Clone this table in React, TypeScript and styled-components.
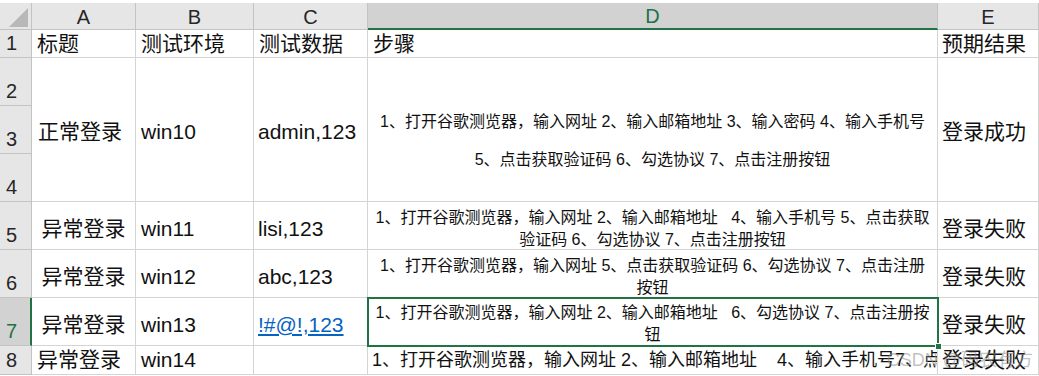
import React from 'react';
import styled, { createGlobalStyle, css } from 'styled-components';

const green = '#217346';
const grid = '#d4d4d4';
const headLine = '#c3c3c3';
const font = `"Liberation Sans", "Noto Sans CJK SC", sans-serif`;

const GlobalStyle = createGlobalStyle`
  html, body {
    margin: 0;
    padding: 0;
    background: #ffffff;
    overflow: hidden;
  }
  body {
    font-family: ${font};
    color: #111111;
  }
`;

interface CellProps {
  $align?: 'left' | 'center';
  $size?: number;
  $span?: number;
  $pt?: number;
  $pl?: number;
  $lh?: number;
}

const Sheet = styled.div`
  position: relative;
  display: grid;
  grid-template-columns: 32px 104px 118px 114px 570px 101px;
  grid-template-rows: 27px 28px 48px 48px 48px 48px 48px 48px 29px;
  padding-top: 3px;
  width: 1039px;
`;

const Corner = styled.div`
  display: flex;
  align-items: flex-end;
  justify-content: flex-end;
  padding: 0 3px 2px 0;
  background: #e6e6e6;
  border-right: 1px solid ${headLine};
  border-bottom: 1px solid ${headLine};

  &::before {
    content: '';
    width: 0;
    height: 0;
    border-left: 19px solid transparent;
    border-bottom: 19px solid #b8b8b8;
  }
`;

const ColHeader = styled.div<{ $selected?: boolean }>`
  display: flex;
  align-items: center;
  justify-content: center;
  padding-top: 2px;
  font-size: 20px;
  color: #262626;
  background: #e6e6e6;
  border-right: 1px solid ${headLine};
  border-bottom: 1px solid ${headLine};

  ${(p) =>
    p.$selected &&
    css`
      background: #d2d2d2;
      color: ${green};
      border-bottom: 2px solid ${green};
    `}
`;

const RowHeader = styled.div<{ $selected?: boolean }>`
  display: flex;
  align-items: flex-end;
  padding: 0 0 3px 6px;
  font-size: 20px;
  line-height: 22px;
  color: #262626;
  background: #e6e6e6;
  border-right: 1px solid ${headLine};
  border-bottom: 1px solid ${headLine};

  ${(p) =>
    p.$selected &&
    css`
      background: #d2d2d2;
      color: ${green};
      border-right: 2px solid ${green};
    `}
`;

const Cell = styled.div<CellProps>`
  display: flex;
  flex-direction: column;
  justify-content: center;
  align-items: ${(p) => (p.$align === 'center' ? 'center' : 'flex-start')};
  text-align: ${(p) => p.$align ?? 'left'};
  grid-row: span ${(p) => p.$span ?? 1};
  padding: ${(p) => p.$pt ?? 0}px 0 0 ${(p) => p.$pl ?? 4}px;
  font-size: ${(p) => p.$size ?? 21}px;
  line-height: ${(p) => p.$lh ?? 26}px;
  white-space: nowrap;
  overflow: hidden;
  background: #ffffff;
  border-right: 1px solid ${grid};
  border-bottom: 1px solid ${grid};
`;

const Steps = styled(Cell)`
  padding-left: 0;
  font-size: 16px;
`;

const ActiveSteps = styled(Steps)`
  position: relative;
  overflow: visible;
  outline: 2px solid ${green};
  outline-offset: -1px;
  z-index: 2;

  &::after {
    content: '';
    position: absolute;
    right: -5px;
    bottom: -5px;
    width: 5px;
    height: 5px;
    background: ${green};
    border: 1px solid #ffffff;
  }
`;

const Link = styled.span`
  color: #0563c1;
  text-decoration: underline;
  text-underline-offset: 2px;
`;

const Watermark = styled.div`
  position: absolute;
  right: 6px;
  bottom: 4px;
  font-size: 18px;
  color: rgba(140, 140, 140, 0.55);
  pointer-events: none;
  z-index: 3;
`;

const columns = ['A', 'B', 'C', 'D', 'E'];

export default function App() {
  return (
    <>
      <GlobalStyle />
      <Sheet>
        <Corner />
        {columns.map((c) => (
          <ColHeader key={c} $selected={c === 'D'}>
            {c}
          </ColHeader>
        ))}

        <RowHeader>1</RowHeader>
        <Cell $pl={5}>标题</Cell>
        <Cell $pl={5}>测试环境</Cell>
        <Cell $pl={5}>测试数据</Cell>
        <Cell $pl={5}>步骤</Cell>
        <Cell $pl={4}>预期结果</Cell>

        <RowHeader>2</RowHeader>
        <Cell $span={3} $pt={4} $pl={6}>正常登录</Cell>
        <Cell $span={3} $pt={4} $pl={5}>win10</Cell>
        <Cell $span={3} $pt={4} $pl={4}>admin,123</Cell>
        <Steps $span={3} $pt={22} $lh={38} $align="center">
          <span>1、打开谷歌测览器，输入网址 2、输入邮箱地址 3、输入密码 4、输入手机号</span>
          <span>5、点击获取验证码 6、勾选协议 7、点击注册按钮</span>
        </Steps>
        <Cell $span={3} $pt={4} $pl={4}>登录成功</Cell>
        <RowHeader>3</RowHeader>
        <RowHeader>4</RowHeader>

        <RowHeader>5</RowHeader>
        <Cell $align="center" $pt={6} $pl={0}>异常登录</Cell>
        <Cell $pt={6} $pl={5}>win11</Cell>
        <Cell $pt={6} $pl={4}>lisi,123</Cell>
        <Steps $align="center" $pt={6} $lh={22}>
          <span>1、打开谷歌测览器，输入网址 2、输入邮箱地址&nbsp;&nbsp;&nbsp;4、输入手机号 5、点击获取</span>
          <span>验证码 6、勾选协议 7、点击注册按钮</span>
        </Steps>
        <Cell $pt={6} $pl={4}>登录失败</Cell>

        <RowHeader>6</RowHeader>
        <Cell $align="center" $pt={6} $pl={0}>异常登录</Cell>
        <Cell $pt={6} $pl={5}>win12</Cell>
        <Cell $pt={6} $pl={4}>abc,123</Cell>
        <Steps $align="center" $pt={6} $lh={22}>
          <span>1、打开谷歌测览器，输入网址 5、点击获取验证码 6、勾选协议 7、点击注册</span>
          <span>按钮</span>
        </Steps>
        <Cell $pt={6} $pl={4}>登录失败</Cell>

        <RowHeader $selected>7</RowHeader>
        <Cell $align="center" $pt={6} $pl={0}>异常登录</Cell>
        <Cell $pt={6} $pl={5}>win13</Cell>
        <Cell $pt={6} $pl={4}>
          <Link>!#@!,123</Link>
        </Cell>
        <ActiveSteps $align="center" $pt={4} $lh={22}>
          <span>1、打开谷歌测览器，输入网址 2、输入邮箱地址&nbsp;&nbsp;&nbsp;6、勾选协议 7、点击注册按</span>
          <span>钮</span>
        </ActiveSteps>
        <Cell $pt={6} $pl={4}>登录失败</Cell>

        <RowHeader>8</RowHeader>
        <Cell $pl={5}>异常登录</Cell>
        <Cell $pl={5}>win14</Cell>
        <Cell $pl={4} />
        <Cell $size={18} $pl={4}>
          1、打开谷歌测览器，输入网址 2、输入邮箱地址&nbsp;&nbsp;&nbsp;&nbsp;4、输入手机号7、点击获取验证码
        </Cell>
        <Cell $pl={4}>登录失败</Cell>

        <Watermark>CSDN @码农有方</Watermark>
      </Sheet>
    </>
  );
}
